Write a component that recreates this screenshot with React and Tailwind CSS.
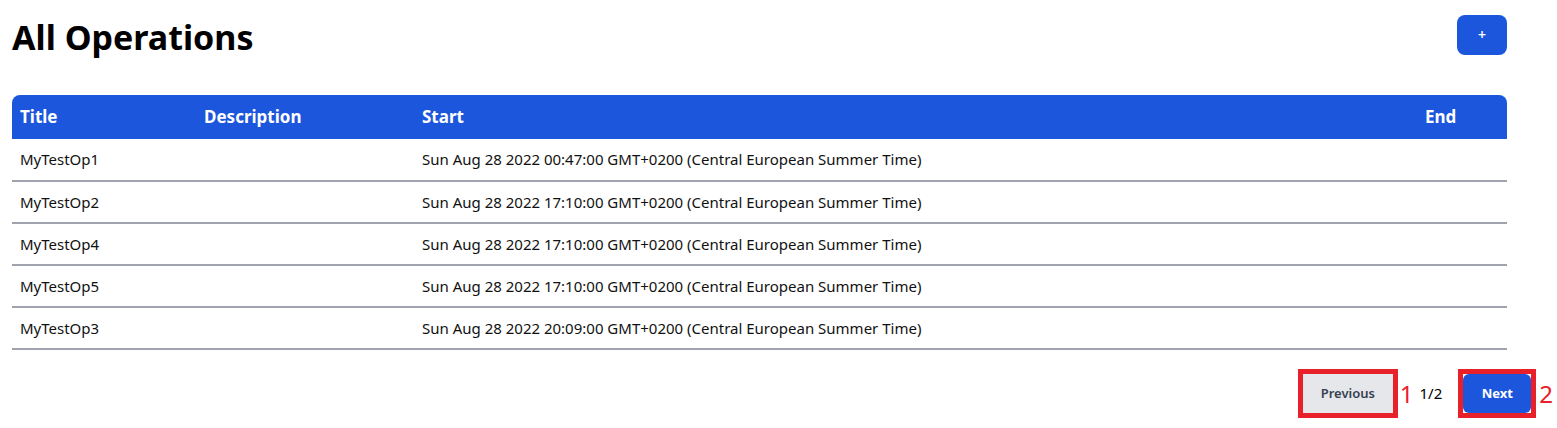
import React from 'react';

const operations = [
  { title: 'MyTestOp1', description: '', start: 'Sun Aug 28 2022 00:47:00 GMT+0200 (Central European Summer Time)', end: '' },
  { title: 'MyTestOp2', description: '', start: 'Sun Aug 28 2022 17:10:00 GMT+0200 (Central European Summer Time)', end: '' },
  { title: 'MyTestOp4', description: '', start: 'Sun Aug 28 2022 17:10:00 GMT+0200 (Central European Summer Time)', end: '' },
  { title: 'MyTestOp5', description: '', start: 'Sun Aug 28 2022 17:10:00 GMT+0200 (Central European Summer Time)', end: '' },
  { title: 'MyTestOp3', description: '', start: 'Sun Aug 28 2022 20:09:00 GMT+0200 (Central European Summer Time)', end: '' },
];

export default function App() {
  return (
    <div className="min-h-screen bg-white text-[#111] font-['Segoe_UI','Noto_Sans',sans-serif] pl-3 pr-[50px]">
      {/* Header */}
      <div className="flex items-start justify-between mt-[15px] h-10">
        <h1 className="text-[34px] font-bold leading-[40px] text-black mt-[2px]">All Operations</h1>
        <button className="w-[50px] h-10 rounded-lg bg-[#1c56dc] text-white text-sm font-semibold">+</button>
      </div>

      {/* Table */}
      <table className="w-full mt-10 table-fixed border-collapse">
        <colgroup>
          <col className="w-[184px]" />
          <col className="w-[218px]" />
          <col />
          <col className="w-[90px]" />
        </colgroup>
        <thead>
          <tr className="bg-[#1c56dc] text-white text-[17px] font-bold text-left h-11">
            <th className="px-2 rounded-tl-lg">Title</th>
            <th className="px-2">Description</th>
            <th className="px-2">Start</th>
            <th className="px-2 rounded-tr-lg">End</th>
          </tr>
        </thead>
        <tbody>
          {operations.map((op) => (
            <tr key={op.title} className="h-[42px] border-b-2 border-[#a0a3ad] text-[15px]">
              <td className="px-2">{op.title}</td>
              <td className="px-2">{op.description}</td>
              <td className="px-2 whitespace-nowrap">{op.start}</td>
              <td className="px-2">{op.end}</td>
            </tr>
          ))}
        </tbody>
      </table>

      {/* Pagination */}
      <div className="flex items-center justify-end mt-[19px] -mr-[46px]">
        <div className="w-[100px] h-[49px] border-[5px] border-[#e8202a]">
          <button className="w-full h-full bg-[#e5e7eb] text-[13px] font-semibold text-[#374151]">Previous</button>
        </div>
        <span className="ml-[2px] text-[24px] leading-none text-[#e8202a]">1</span>
        <span className="ml-[6px] text-[15px] text-black">1/2</span>
        <div className="ml-4 w-[78px] h-[49px] border-[5px] border-[#e8202a] bg-white">
          <button className="w-full h-full rounded-md bg-[#1c56dc] text-[13px] font-bold text-white">Next</button>
        </div>
        <span className="ml-[3px] text-[24px] leading-none text-[#e8202a]">2</span>
      </div>
    </div>
  );
}
